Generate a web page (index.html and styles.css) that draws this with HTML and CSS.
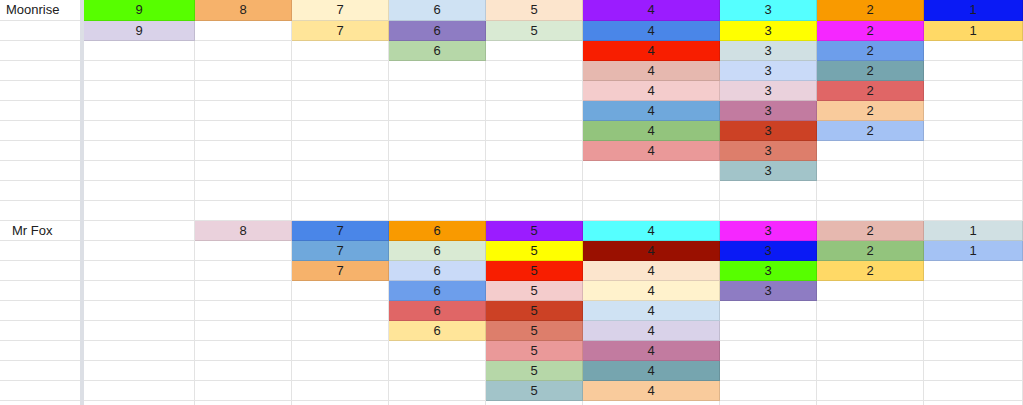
FILE: index.html
```html
<!DOCTYPE html>
<html>
<head>
<meta charset="utf-8">
<link rel="stylesheet" href="styles.css">
</head>
<body>
<div class="sheet">
  <div class="row first"><div class="name">Moonrise</div><div class="bar"></div><div class="cell lime">9</div><div class="cell org1">8</div><div class="cell ylw3">7</div><div class="cell blu3">6</div><div class="cell org3">5</div><div class="cell purple">4</div><div class="cell cyan">3</div><div class="cell orange">2</div><div class="cell blue">1</div></div>
  <div class="row"><div class="name"></div><div class="bar"></div><div class="cell pur3">9</div><div class="cell"></div><div class="cell ylw2">7</div><div class="cell pur1">6</div><div class="cell grn3">5</div><div class="cell corn">4</div><div class="cell yellow">3</div><div class="cell magenta">2</div><div class="cell ylw1">1</div></div>
  <div class="row"><div class="name"></div><div class="bar"></div><div class="cell"></div><div class="cell"></div><div class="cell"></div><div class="cell grn2">6</div><div class="cell"></div><div class="cell red">4</div><div class="cell cya3">3</div><div class="cell cor1">2</div><div class="cell"></div></div>
  <div class="row"><div class="name"></div><div class="bar"></div><div class="cell"></div><div class="cell"></div><div class="cell"></div><div class="cell"></div><div class="cell"></div><div class="cell ber3">4</div><div class="cell cor3">3</div><div class="cell cya1">2</div><div class="cell"></div></div>
  <div class="row"><div class="name"></div><div class="bar"></div><div class="cell"></div><div class="cell"></div><div class="cell"></div><div class="cell"></div><div class="cell"></div><div class="cell red3">4</div><div class="cell mag3">3</div><div class="cell red1">2</div><div class="cell"></div></div>
  <div class="row"><div class="name"></div><div class="bar"></div><div class="cell"></div><div class="cell"></div><div class="cell"></div><div class="cell"></div><div class="cell"></div><div class="cell blu1">4</div><div class="cell mag1">3</div><div class="cell org2">2</div><div class="cell"></div></div>
  <div class="row"><div class="name"></div><div class="bar"></div><div class="cell"></div><div class="cell"></div><div class="cell"></div><div class="cell"></div><div class="cell"></div><div class="cell grn1">4</div><div class="cell berry">3</div><div class="cell cor2">2</div><div class="cell"></div></div>
  <div class="row"><div class="name"></div><div class="bar"></div><div class="cell"></div><div class="cell"></div><div class="cell"></div><div class="cell"></div><div class="cell"></div><div class="cell red2">4</div><div class="cell ber1">3</div><div class="cell"></div><div class="cell"></div></div>
  <div class="row"><div class="name"></div><div class="bar"></div><div class="cell"></div><div class="cell"></div><div class="cell"></div><div class="cell"></div><div class="cell"></div><div class="cell"></div><div class="cell cya2">3</div><div class="cell"></div><div class="cell"></div></div>
  <div class="row"><div class="name"></div><div class="bar"></div><div class="cell"></div><div class="cell"></div><div class="cell"></div><div class="cell"></div><div class="cell"></div><div class="cell"></div><div class="cell"></div><div class="cell"></div><div class="cell"></div></div>
  <div class="row"><div class="name"></div><div class="bar"></div><div class="cell"></div><div class="cell"></div><div class="cell"></div><div class="cell"></div><div class="cell"></div><div class="cell"></div><div class="cell"></div><div class="cell"></div><div class="cell"></div></div>
  <div class="row"><div class="name fox">Mr Fox</div><div class="bar"></div><div class="cell"></div><div class="cell mag3">8</div><div class="cell corn">7</div><div class="cell orange">6</div><div class="cell purple">5</div><div class="cell cyan">4</div><div class="cell magenta">3</div><div class="cell ber3">2</div><div class="cell cya3">1</div></div>
  <div class="row"><div class="name"></div><div class="bar"></div><div class="cell"></div><div class="cell"></div><div class="cell blu1">7</div><div class="cell grn3">6</div><div class="cell yellow">5</div><div class="cell dred">4</div><div class="cell blue">3</div><div class="cell grn1">2</div><div class="cell cor2">1</div></div>
  <div class="row"><div class="name"></div><div class="bar"></div><div class="cell"></div><div class="cell"></div><div class="cell org1">7</div><div class="cell cor3">6</div><div class="cell red">5</div><div class="cell org3">4</div><div class="cell lime">3</div><div class="cell ylw1">2</div><div class="cell"></div></div>
  <div class="row"><div class="name"></div><div class="bar"></div><div class="cell"></div><div class="cell"></div><div class="cell"></div><div class="cell cor1">6</div><div class="cell red3">5</div><div class="cell ylw3">4</div><div class="cell pur1">3</div><div class="cell"></div><div class="cell"></div></div>
  <div class="row"><div class="name"></div><div class="bar"></div><div class="cell"></div><div class="cell"></div><div class="cell"></div><div class="cell red1">6</div><div class="cell berry">5</div><div class="cell blu3">4</div><div class="cell"></div><div class="cell"></div><div class="cell"></div></div>
  <div class="row"><div class="name"></div><div class="bar"></div><div class="cell"></div><div class="cell"></div><div class="cell"></div><div class="cell ylw2">6</div><div class="cell ber1">5</div><div class="cell pur3">4</div><div class="cell"></div><div class="cell"></div><div class="cell"></div></div>
  <div class="row"><div class="name"></div><div class="bar"></div><div class="cell"></div><div class="cell"></div><div class="cell"></div><div class="cell"></div><div class="cell red2">5</div><div class="cell mag1">4</div><div class="cell"></div><div class="cell"></div><div class="cell"></div></div>
  <div class="row"><div class="name"></div><div class="bar"></div><div class="cell"></div><div class="cell"></div><div class="cell"></div><div class="cell"></div><div class="cell grn2">5</div><div class="cell cya1">4</div><div class="cell"></div><div class="cell"></div><div class="cell"></div></div>
  <div class="row"><div class="name"></div><div class="bar"></div><div class="cell"></div><div class="cell"></div><div class="cell"></div><div class="cell"></div><div class="cell cya2">5</div><div class="cell org2">4</div><div class="cell"></div><div class="cell"></div><div class="cell"></div></div>
  <div class="row"><div class="name"></div><div class="bar"></div><div class="cell"></div><div class="cell"></div><div class="cell"></div><div class="cell"></div><div class="cell"></div><div class="cell"></div><div class="cell"></div><div class="cell"></div><div class="cell"></div></div>
</div>
</body>
</html>
```

FILE: styles.css
```css
html, body {
  margin: 0;
  padding: 0;
  background: #ffffff;
  overflow: hidden;
}
.sheet {
  width: 1023px;
  height: 405px;
  overflow: hidden;
  font-family: "Liberation Sans", Arial, sans-serif;
  font-size: 13px;
  color: #1e1e1e;
}
.row {
  display: grid;
  grid-template-columns: 80px 4px 111px 97px 97px 97px 97px 137px 97px 107px 99px;
  height: 20px;
}
.row.first {
  height: 21px;
}
.name, .cell {
  box-sizing: border-box;
  height: 100%;
  line-height: 19px;
  white-space: nowrap;
  overflow: hidden;
  border-bottom: 1px solid rgba(0, 0, 0, 0.11);
}
.row.first .name, .row.first .cell {
  line-height: 20px;
}
.name {
  padding-left: 6px;
  color: #202020;
}
.name.fox {
  padding-left: 12px;
}
.bar {
  background: #dcdfe5;
}
.cell {
  text-align: center;
  border-right: 1px solid rgba(0, 0, 0, 0.11);
}

.lime { background: #57fe00; }
.org1 { background: #f6b26b; }
.org2 { background: #f9cb9c; }
.org3 { background: #fce5cd; }
.orange { background: #f99a00; }
.ylw1 { background: #ffd966; }
.ylw2 { background: #ffe599; }
.ylw3 { background: #fff2cc; }
.yellow { background: #ffff00; }
.blu1 { background: #6fa8dc; }
.blu3 { background: #cfe2f3; }
.blue { background: #0a1af5; }
.purple { background: #9b1cff; }
.pur1 { background: #8e7cc3; }
.pur3 { background: #d9d2e9; }
.cyan { background: #55ffff; }
.cya1 { background: #76a5af; }
.cya2 { background: #a2c4c9; }
.cya3 { background: #d0e0e3; }
.grn1 { background: #93c47d; }
.grn2 { background: #b6d7a8; }
.grn3 { background: #d9ead3; }
.corn { background: #4a86e8; }
.cor1 { background: #6d9eeb; }
.cor2 { background: #a4c2f4; }
.cor3 { background: #c9daf8; }
.magenta { background: #f527ff; }
.mag1 { background: #c27ba0; }
.mag3 { background: #ead1dc; }
.red { background: #f81e00; }
.red1 { background: #e06666; }
.red2 { background: #ea9999; }
.red3 { background: #f4cccc; }
.dred { background: #9a1000; }
.berry { background: #cc4125; }
.ber1 { background: #dd7e6b; }
.ber3 { background: #e6b8af; }
```
